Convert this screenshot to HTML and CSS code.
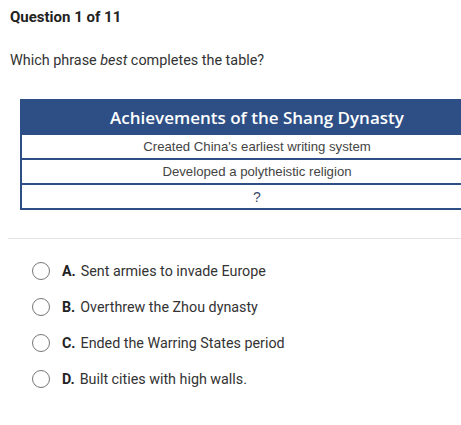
FILE: index.html
```html
<!DOCTYPE html>
<html lang="en">
<head>
  <meta charset="UTF-8" />
  <title>Question 1 of 11</title>
  <link rel="stylesheet" href="styles.css">
</head>
<body>
  <h1 class="q-title">Question 1 of 11</h1>

  <p class="q-prompt">Which phrase <em>best</em> completes the table?</p>

  <div class="figure">
    <table class="facts">
      <thead>
        <tr><th>Achievements of the Shang Dynasty</th></tr>
      </thead>
      <tbody>
        <tr><td>Created China's earliest writing system</td></tr>
        <tr><td>Developed a polytheistic religion</td></tr>
        <tr><td class="unknown">?</td></tr>
      </tbody>
    </table>
  </div>

  <hr class="divider" />

  <ul class="choices">
    <li class="choice"><span class="radio"></span><b>A.</b> Sent armies to invade Europe</li>
    <li class="choice"><span class="radio"></span><b>B.</b> Overthrew the Zhou dynasty</li>
    <li class="choice"><span class="radio"></span><b>C.</b> Ended the Warring States period</li>
    <li class="choice"><span class="radio"></span><b>D.</b> Built cities with high walls.</li>
  </ul>
</body>
</html>
```

FILE: styles.css
```css
body {
  margin: 0;
  padding: 0 0 0 10px;
  font-family: Roboto, "Noto Sans", sans-serif;
  color: #333;
  background: #fff;
  overflow: hidden;
}
.q-title {
  margin: 0;
  padding-top: 8px;
  font-size: 15px;
  line-height: 18px;
  font-weight: 700;
  color: #222;
}
.q-prompt {
  margin: 25px 0 0;
  font-size: 14.4px;
  line-height: 20px;
}
.figure {
  margin: 28px 0 0 10px;
  width: 480px;
}
.facts {
  border-collapse: collapse;
  width: 474px;
  border: 2px solid #2d4f85;
}
.facts th {
  background: #2d4f85;
  color: #fff;
  font-family: "Open Sans", sans-serif;
  font-weight: 600;
  font-size: 17px;
  height: 32px;
  padding: 0;
}
.facts td {
  border-top: 2px solid #2d4f85;
  height: 23px;
  padding: 0;
  text-align: center;
  font-family: "Liberation Sans", Arial, sans-serif;
  font-size: 13.2px;
  color: #444;
}
.facts td.unknown {
  color: #3a4a66;
  font-size: 14px;
}
.divider {
  margin: 28px 0 0 -2px;
  border: 0;
  border-top: 1px solid #e3e3e3;
}
.choices {
  list-style: none;
  margin: 14px 0 0;
  padding: 0 0 0 22px;
}
.choice {
  display: flex;
  align-items: center;
  height: 36px;
  font-size: 14.3px;
  color: #333;
}
.choice b {
  margin-right: 5px;
  color: #222;
}
.radio {
  width: 16px;
  height: 16px;
  border: 1px solid #777;
  border-radius: 50%;
  margin-right: 12px;
}
```
